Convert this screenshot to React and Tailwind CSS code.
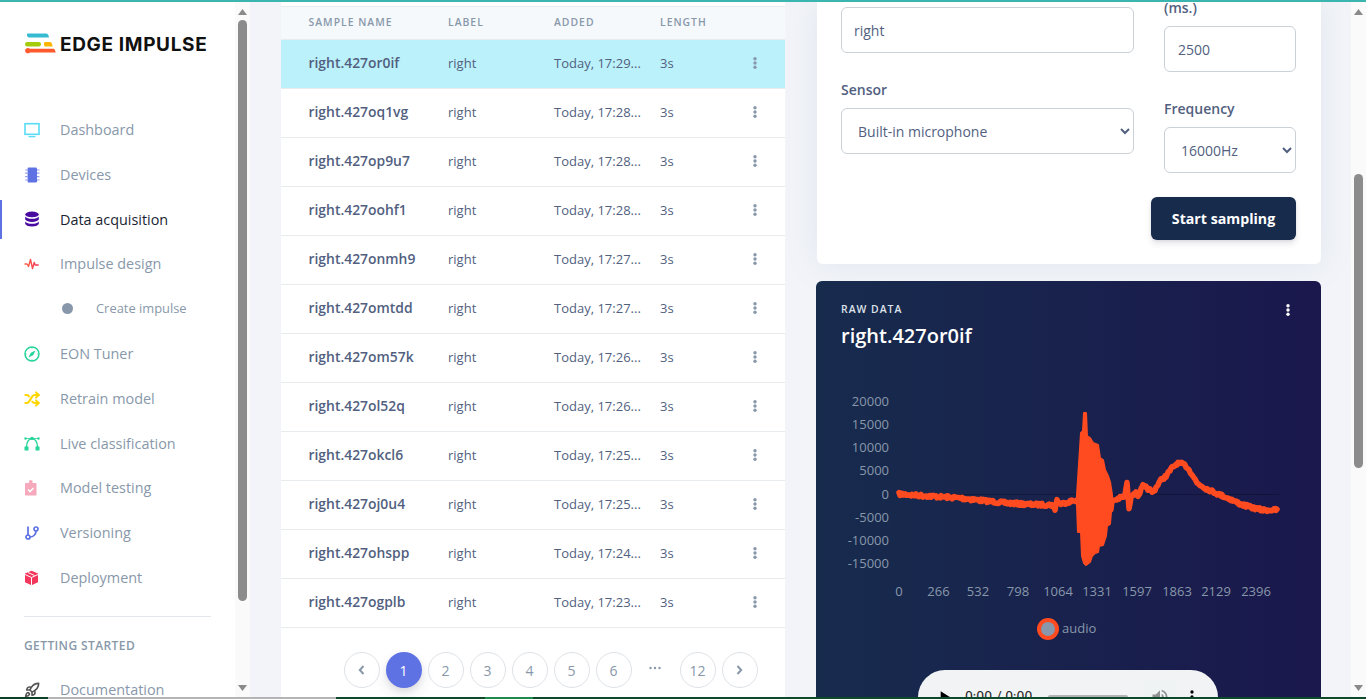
import React from "react";
import { Shuffle, GitBranch, Rocket } from "lucide-react";

const Svg = ({ children, size = 16 }) => (
  <svg width={size} height={size} viewBox="0 0 16 16" fill="none" className="block">{children}</svg>
);

const IconMonitor = () => (
  <Svg>
    <rect x="1" y="1.7" width="14" height="10.6" stroke="#5bdcf6" strokeWidth="1.6" />
    <path d="M4.5 14.6h7" stroke="#5bdcf6" strokeWidth="1.4" />
  </Svg>
);
const IconChip = () => (
  <Svg>
    <rect x="3.6" y="0.5" width="9.4" height="15" rx="1.2" fill="#5e72e4" />
    <path d="M1.200 3h2.400M1.200 6.200h2.400M1.200 9.600h2.400M1.200 13h2.400M13 3h2.400M13 6.200h2.400M13 9.600h2.400M13 13h2.400" stroke="#8e9cf0" strokeWidth="1.2" />
  </Svg>
);
const IconDb = () => (
  <Svg>
    <ellipse cx="8" cy="3.4" rx="6.8" ry="2.8" fill="#4a0aa0" />
    <path d="M1.2 5.4c1 1.7 3.6 2.4 6.8 2.4s5.800-.7 6.800-2.400v3.200c-1 1.700-3.600 2.400-6.800 2.400s-5.800-.7-6.800-2.400z" fill="#4a0aa0" />
    <path d="M1.200 10.400c1 1.700 3.600 2.400 6.800 2.400s5.800-.7 6.800-2.400v2.600c-1 1.700-3.600 2.500-6.800 2.500s-5.800-.8-6.800-2.500z" fill="#4a0aa0" />
  </Svg>
);
const IconPulse = () => (
  <Svg>
    <defs>
      <linearGradient id="pg" x1="0" x2="1" y1="0" y2="0">
        <stop offset="0" stopColor="#fb6340" />
        <stop offset="1" stopColor="#f5365c" />
      </linearGradient>
    </defs>
    <path d="M0.500 8.500h2.500l1.500 2.500 2-7 2 9 1.700-6 1 2.500h3.500" stroke="url(#pg)" strokeWidth="1.400" strokeLinejoin="round" transform="translate(0 -.5)" />
  </Svg>
);
const IconCompass = () => (
  <Svg>
    <circle cx="8" cy="8" r="7" stroke="#27d49b" strokeWidth="1.500" />
    <path d="M11.500 4.500 9.200 9.200 4.500 11.500 6.800 6.800z" fill="#27d49b" />
    <path d="M8 1v1.500M8 13.500V15M1 8h1.500M13.500 8H15" stroke="#27d49b" strokeWidth="1" />
  </Svg>
);
const IconBezier = () => (
  <Svg>
    <path d="M2.500 12c0-5 2.500-8.500 5.500-8.500s5.500 3.500 5.500 8.500" stroke="#27d49b" strokeWidth="1.400" />
    <path d="M1 3.500h14" stroke="#27d49b" strokeWidth="0.800" />
    <rect x="6.500" y="2" width="3" height="3" fill="#27d49b" />
    <circle cx="1.500" cy="3.500" r="1.200" fill="#27d49b" />
    <circle cx="14.500" cy="3.500" r="1.200" fill="#27d49b" />
    <rect x="0.500" y="11.500" width="4" height="4" fill="#27d49b" />
    <rect x="11.500" y="11.500" width="4" height="4" fill="#27d49b" />
  </Svg>
);
const IconClip = () => (
  <Svg>
    <path d="M2 3h3V1.200C5 .6 5.500 .2 6 .2h1.500c.5 0 1 .4 1 1V3h3c.6 0 1 .4 1 1v10.500c0 .6-.4 1-1 1H2c-.6 0-1-.4-1-1V4c0-.6.4-1 1-1z" fill="#f5a9ba" />
    <path d="M4 9.500l2 2 3.500-3.500" stroke="#fff" strokeWidth="1.600" />
  </Svg>
);
const IconBox = () => (
  <Svg>
    <path d="M7.500.8 14 3.500v8.700l-6.500 3-6.500-3V3.500z" fill="#f5365c" />
    <path d="M1 4.500l6.500 3 6.500-3M7.500 7.500v7.500M4 2.500l6.500 3" stroke="#fff" strokeWidth="1" />
  </Svg>
);

const nav = [
  { t: "Dashboard", i: <IconMonitor /> },
  { t: "Devices", i: <IconChip /> },
  { t: "Data acquisition", i: <IconDb />, active: true },
  { t: "Impulse design", i: <IconPulse /> },
  { t: "Create impulse", sub: true },
  { t: "EON Tuner", i: <IconCompass /> },
  { t: "Retrain model", i: <Shuffle size={16} color="#ffd600" strokeWidth={3} /> },
  { t: "Live classification", i: <IconBezier /> },
  { t: "Model testing", i: <IconClip /> },
  { t: "Versioning", i: <GitBranch size={16} color="#5e72e4" strokeWidth={2.6} /> },
  { t: "Deployment", i: <IconBox /> },
];

const rows = [
  ["right.427or0if", "17:29"],
  ["right.427oq1vg", "17:28"],
  ["right.427op9u7", "17:28"],
  ["right.427oohf1", "17:28"],
  ["right.427onmh9", "17:27"],
  ["right.427omtdd", "17:27"],
  ["right.427om57k", "17:26"],
  ["right.427ol52q", "17:26"],
  ["right.427okcl6", "17:25"],
  ["right.427oj0u4", "17:25"],
  ["right.427ohspp", "17:24"],
  ["right.427ogplb", "17:23"],
];

const Arrow = ({ dir }) => (
  <svg width="9" height="6" viewBox="0 0 9 6" className="block">
    <path d={dir === "up" ? "M4.500 0 9 6H0z" : "M0 0h9L4.500 6z"} fill="#8a8a8a" />
  </svg>
);

function Scrollbar({ thumbTop, thumbH, bar }) {
  return (
    <div className={`w-[15px] shrink-0 h-full flex flex-col items-center ${bar}`}>
      <div className="h-[18px] shrink-0 flex items-center justify-center pt-[2px]">
        <Arrow dir="up" />
      </div>
      <div className="flex-1 w-[9px]">
        <div className="w-[9px] rounded-[5px] bg-[#8c8c8c]" style={{ marginTop: thumbTop, height: thumbH }} />
      </div>
      <div className="h-[18px] shrink-0 flex items-center justify-center">
        <Arrow dir="down" />
      </div>
    </div>
  );
}

function Sidebar() {
  return (
    <div className="w-[250px] shrink-0 h-full flex">
      <div className="w-[235px] h-full bg-white overflow-hidden">
        <div className="flex items-center pl-[25px] h-[52px] mt-[16px]">
          <svg width="31" height="22" viewBox="0 0 31 22" className="block shrink-0">
            <path d="M2.500 0.500 H21 Q23.500 .7 24 4.500 H4 A2.500 2.500 0 0 1 2.500 .5z" fill="#36bcd2" />
            <rect x="0" y="9" width="16" height="4.500" rx="2.250" fill="#a4cb0c" />
            <path d="M19.500 9H25q2 .2 2.500 4.500h-8q-1.500-2.250 0-4.500z" fill="#fbb400" />
            <path d="M0 18a3 3 0 0 1 5-2.200H29q1.300 1 1.700 3.700H5A3 3 0 0 1 0 18z" fill="#ff5a2e" />
          </svg>
          <span className="ml-[4px] pt-[2px] font-['Inter',sans-serif] font-bold text-[19px] tracking-[0.650px] text-[#111] whitespace-nowrap">EDGE IMPULSE</span>
        </div>
        <div className="mt-[37.400px] flex flex-col">
          {nav.map((n) => (
            <div key={n.t} className="relative h-[44.800px] flex items-center pl-[24px] shrink-0">
              {n.active && <div className="absolute left-0 top-[3px] bottom-[3px] w-[2px] bg-[#5e72e4]" />}
              {n.sub ? (
                <>
                  <div className="w-[11px] h-[11px] rounded-full bg-[#8898aa] ml-[38px]" />
                  <span className="ml-[23px] text-[12.900px] text-[#8898aa] whitespace-nowrap">{n.t}</span>
                </>
              ) : (
                <>
                  <div className="w-[36px] shrink-0">{n.i}</div>
                  <span className={`text-[14.400px] whitespace-nowrap ${n.active ? "text-[#1a1f33]" : "text-[#8898aa]"}`}>{n.t}</span>
                </>
              )}
            </div>
          ))}
        </div>
        <div className="mx-[24px] w-[187px] h-px bg-[#e3e6ec] mt-[15.600px]" />
        <div className="ml-[24px] mt-[20px] text-[12px] leading-[18px] font-semibold tracking-[0.400px] text-[#8898aa]">GETTING STARTED</div>
        <div className="mt-[24px] flex items-center pl-[24px] h-[22px]">
          <div className="w-[36px] shrink-0">
            <Rocket size={16} color="#555" strokeWidth={2.4} />
          </div>
          <span className="text-[14.400px] text-[#8898aa] whitespace-nowrap">Documentation</span>
        </div>
      </div>
      <Scrollbar thumbTop={0} thumbH={581} bar="bg-[#fafafa]" />
    </div>
  );
}

const Kebab = ({ color = "#8898aa" }) => (
  <svg width="6" height="12" viewBox="0 0 6 12" className="block">
    <circle cx="3" cy="1.700" r="1.700" fill={color} />
    <circle cx="3" cy="6" r="1.700" fill={color} />
    <circle cx="3" cy="10.300" r="1.700" fill={color} />
  </svg>
);

const grid = "grid grid-cols-[139.500px_106px_106px_91.500px_1fr] items-center pl-[27.500px]";

function SampleTable() {
  const pages = ["‹", "1", "2", "3", "4", "5", "6", "…", "12", "›"];
  return (
    <div className="w-[504px] shrink-0 h-full bg-white flex flex-col">
      <div className="h-[4px] shrink-0" />
      <div className={`${grid} h-[34px] shrink-0 bg-[#f6f9fc] border-y border-[#e9ecef] text-[10.400px] font-semibold tracking-[1px] text-[#8898aa]`}>
        <span>SAMPLE NAME</span>
        <span>LABEL</span>
        <span>ADDED</span>
        <span className="whitespace-nowrap">LENGTH</span>
      </div>
      {rows.map(([name, time], i) => (
        <div key={name} className={`${grid} h-[49px] shrink-0 border-b border-[#e9ecef] ${i === 0 ? "bg-[#bbf1fb]" : ""}`}>
          <span className="text-[13.900px] font-semibold text-[#525f7f] pb-[2px]">{name}</span>
          <span className="text-[13px] text-[#525f7f]">right</span>
          <span className="text-[13px] text-[#525f7f] whitespace-nowrap">{`Today, ${time}...`}</span>
          <span className="text-[13px] text-[#525f7f]">3s</span>
          <span className="pb-[2px]"><Kebab /></span>
        </div>
      ))}
      <div className="flex gap-[6px] pl-[63px] mt-[24px]">
        {pages.map((p) => {
          if (p === "…")
            return (
              <div key={p} className="w-[36px] h-[36px] flex items-center justify-center pb-[4px] pr-[2px] text-[14px] text-[#8898aa]">
                <svg width="14" height="4" viewBox="0 0 14 4"><circle cx="2.500" cy="2" r="1.200" fill="#8898aa" /><circle cx="7" cy="2" r="1.200" fill="#8898aa" /><circle cx="11.500" cy="2" r="1.200" fill="#8898aa" /></svg>
              </div>
            );
          if (p === "1")
            return (
              <div key={p} className="w-[36px] h-[36px] rounded-full bg-[#5e72e4] text-white flex items-center justify-center pr-px text-[14px] shadow-[0_7px_14px_rgba(50,50,93,0.1),0_3px_6px_rgba(0,0,0,0.08)]">
                {p}
              </div>
            );
          if (p === "‹" || p === "›")
            return (
              <div key={p} className="w-[36px] h-[36px] rounded-full border border-[#dee2e6] flex items-center justify-center pr-px">
                <svg width="7" height="10" viewBox="0 0 7 10">
                  <path d={p === "‹" ? "M5.500 1 1.800 5l3.700 4" : "M1.500 1l3.700 4-3.700 4"} stroke="#8898aa" strokeWidth="2" fill="none" />
                </svg>
              </div>
            );
          return (
            <div key={p} className="w-[36px] h-[36px] rounded-full border border-[#dee2e6] text-[#8898aa] flex items-center justify-center pr-px text-[14px]">
              {p}
            </div>
          );
        })}
      </div>
    </div>
  );
}

const labelCls = "block text-[14px] leading-[21px] font-semibold text-[#525f7f]";
const fieldCls = "block w-full h-[46px] border border-[#cad1d7] rounded-[6px] text-[14px] text-[#525f7f] bg-white";

function SampleForm() {
  return (
    <div className="bg-white rounded-b-[6px] shadow-[0_0_32px_rgba(136,152,170,0.15)] pl-[24px] pr-[25px] pb-[24px]">
      <div className="grid grid-cols-[293px_132px] gap-x-[30px]">
        <div className="-mt-[24px]">
          <label className={`${labelCls} mb-[8px]`}>Label</label>
          <input readOnly value="right" className={`${fieldCls} px-[12px] outline-none`} />
          <label className={`${labelCls} mt-[26px] mb-[8px]`}>Sensor</label>
          <select className={`${fieldCls} pl-[12px] pr-[2px]`} defaultValue="m">
            <option value="m">Built-in microphone</option>
          </select>
        </div>
        <div className="-mt-[26px]">
          <label className={`${labelCls} mb-[8px]`}>Sample length (ms.)</label>
          <input readOnly value="2500" className={`${fieldCls} px-[13px] outline-none`} />
          <label className={`${labelCls} mt-[26px] mb-[8px]`}>Frequency</label>
          <select className={`${fieldCls} pl-[12px] pr-[2px]`} defaultValue="f">
            <option value="f">16000Hz</option>
          </select>
        </div>
      </div>
      <div className="flex justify-end mt-[24px]">
        <button className="w-[145px] h-[43px] rounded-[6px] bg-[#172b4d] text-white text-[14.200px] font-bold shadow-[0_4px_6px_rgba(50,50,93,0.11),0_1px_3px_rgba(0,0,0,0.08)]">
          Start sampling
        </button>
      </div>
    </div>
  );
}

let seed = 7;
const rnd = () => {
  seed = (seed * 16807) % 2147483647;
  return seed / 2147483647 - 0.5;
};
const lerp = (pts, x) => {
  for (let i = 0; i < pts.length - 1; i++) {
    if (x >= pts[i][0] && x <= pts[i + 1][0]) {
      const t = (x - pts[i][0]) / (pts[i + 1][0] - pts[i][0]);
      return pts[i][1] + t * (pts[i + 1][1] - pts[i][1]);
    }
  }
  return pts[pts.length - 1][1];
};
const before = [[899, 494], [920, 495.500], [960, 498], [1000, 502.500], [1030, 504.500], [1052, 505], [1055, 509], [1057, 500], [1060, 504], [1077, 500]];
const after = [[1112, 501], [1120, 498], [1125, 496], [1127, 482], [1128, 495], [1129, 510], [1131, 496], [1135, 492], [1138, 496], [1143, 486], [1150, 490], [1153, 492.500], [1160, 481], [1166, 476], [1172, 468], [1177, 463.500], [1183, 464], [1187, 467], [1192, 474], [1197, 483], [1205, 488], [1218, 494], [1230, 499], [1240, 504], [1250, 507], [1262, 510], [1277, 510]];
const topEnv = [[1077, 495], [1081, 433], [1083, 431], [1084, 413], [1086, 413], [1087, 436], [1090, 438], [1093, 443], [1098, 445], [1100, 458], [1103, 460], [1105, 470], [1108, 476], [1110, 482], [1112, 495]];
const botEnv = [[1112, 505], [1111, 512], [1110, 524], [1107, 526], [1106, 536], [1103, 545], [1099, 546], [1098, 552], [1095, 553], [1092, 556], [1090, 562], [1086, 565], [1084, 563], [1082, 556], [1081, 532], [1078, 532], [1077, 505]];

function linePath(pts, from, to) {
  let d = "";
  for (let x = from; x <= to; x += 1) {
    const y = lerp(pts, x) + rnd() * 3;
    d += `${d ? "L" : "M"}${x} ${y.toFixed(1)}`;
  }
  return d;
}
const leftLine = linePath(before, 899, 1078);
const rightLine = linePath(after, 1111, 1277);
const stepped = (pts) => pts.map((p) => `${p[0]} ${p[1]}`).join("L");
const burst = stepped(topEnv) + "L" + stepped(botEnv);

const yTicks = [["20000", 401], ["15000", 424], ["10000", 447], ["5000", 470], ["0", 494], ["-5000", 517], ["-10000", 540], ["-15000", 563]];
const xTicks = [["0", 899], ["266", 938.500], ["532", 978], ["798", 1018], ["1064", 1058], ["1331", 1097], ["1597", 1137], ["1863", 1177], ["2129", 1216], ["2396", 1256]];

const SILENT = "data:audio/wav;base64,UklGRigAAABXQVZFZm10IBIAAAABAAEARKwAAIhYAQACABAAAABkYXRhAgAAAAEA";

function RawData() {
  return (
    <div className="mt-[17px] -ml-px h-[500px] rounded-[6px] bg-gradient-to-r from-[#172b4d] to-[#1a174d]">
      <div className="flex justify-between pl-[25px] pr-[30px] pt-[21px]">
        <div>
          <div className="text-[10.400px] leading-[14px] font-semibold tracking-[1px] text-[#dfe3ea]">RAW DATA</div>
          <div className="mt-[5px] text-[20px] leading-[30px] font-semibold text-white">right.427or0if</div>
        </div>
        <div className="pt-[2px]"><Kebab color="#ffffff" /></div>
      </div>
      <svg width="505" height="270" viewBox="816 380 505 270" className="block mt-[29px]" fontFamily="'Open Sans', sans-serif" fontSize="13" fill="#8898aa">
        {yTicks.map(([t, y]) => (
          <text key={t} x="889" y={y + 4.500} textAnchor="end">{t}</text>
        ))}
        {xTicks.map(([t, x]) => (
          <text key={t} x={x} y="596" textAnchor="middle">{t}</text>
        ))}
        <path d="M899 494.500H1279" stroke="#000" strokeOpacity="0.250" strokeWidth="1" />
        <path d={leftLine} stroke="#ff4b1f" strokeWidth="5.500" fill="none" strokeLinejoin="round" strokeLinecap="round" />
        <path d={rightLine} stroke="#ff4b1f" strokeWidth="5.500" fill="none" strokeLinejoin="round" strokeLinecap="round" />
        <path d={`M${burst}Z`} fill="#ff4b1f" stroke="#ff4b1f" strokeWidth="2" strokeLinejoin="round" />
        <circle cx="1048" cy="629" r="9" fill="#8898aa" stroke="#ff4b1f" strokeWidth="4" />
        <text x="1062" y="633">audio</text>
      </svg>
      <div className="flex justify-center mt-[20px] pr-px">
        <audio
          controls
          src={SILENT}
          className="block w-[300px] h-[54px] [&::-webkit-media-controls-mute-button]:opacity-40 [&::-webkit-media-controls-timeline]:opacity-40"
        />
      </div>
    </div>
  );
}

export default function App() {
  return (
    <div className="w-[1366px] h-[699px] overflow-hidden flex flex-col bg-[#f2f4f9] font-['Open_Sans',sans-serif]">
      <div className="h-[2px] shrink-0 bg-[#3ab5b0]" />
      <div className="flex-1 min-h-0 flex overflow-hidden">
        <Sidebar />
        <div className="flex-1 min-w-0 flex gap-[32px] pl-[31px] overflow-hidden">
          <SampleTable />
          <div className="w-[504px] shrink-0">
            <SampleForm />
            <RawData />
          </div>
        </div>
        <Scrollbar thumbTop={154} thumbH={294} bar="bg-[#fafafa]" />
      </div>
      <div className="h-[2px] shrink-0 flex bg-[#0c4a2a]">
        <div className="w-[48px] bg-[#0c3f25]" />
        <div className="w-[288px] bg-[#b4b4b4]" />
        <div className="w-[149px]" />
        <div className="w-[48px] bg-[#1f8a4c]" />
      </div>
    </div>
  );
}
